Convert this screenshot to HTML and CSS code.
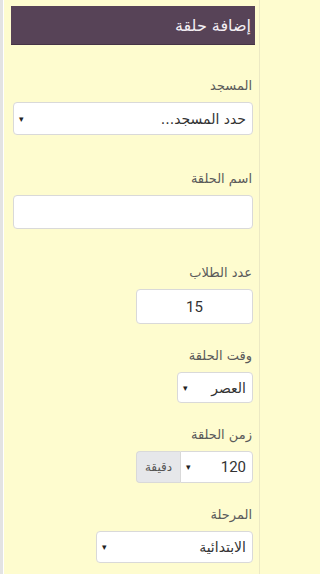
FILE: index.html
```html
<!DOCTYPE html>
<html lang="ar" dir="rtl">
<head>
<meta charset="utf-8">
<title>إضافة حلقة</title>
<link rel="stylesheet" href="styles.css">
</head>
<body>
<div class="frame">
  <div class="inner">
    <div class="panel-head">إضافة حلقة</div>
    <form class="form">
      <div class="group g1">
        <label class="lbl">المسجد</label>
        <div class="ctl sel full h33"><span class="val">حدد المسجد...</span><span class="arrow">▾</span></div>
      </div>
      <div class="group g2">
        <label class="lbl">اسم الحلقة</label>
        <div class="ctl inp full h34"></div>
      </div>
      <div class="group g2">
        <label class="lbl">عدد الطلاب</label>
        <div class="ctl inp num w117 h35"><span class="numtxt">15</span></div>
      </div>
      <div class="group g3">
        <label class="lbl">وقت الحلقة</label>
        <div class="ctl sel w76 h31"><span class="val">العصر</span><span class="arrow">▾</span></div>
      </div>
      <div class="group g3">
        <label class="lbl">زمن الحلقة</label>
        <div class="igroup h32">
          <div class="ctl sel w73 joined"><span class="val numtxt">120</span><span class="arrow">▾</span></div>
          <div class="addon">دقيقة</div>
        </div>
      </div>
      <div class="group g3">
        <label class="lbl">المرحلة</label>
        <div class="ctl sel w157 h32"><span class="val">الابتدائية</span><span class="arrow">▾</span></div>
      </div>
    </form>
  </div>
</div>
</body>
</html>
```
FILE: styles.css
```css
html, body {
  margin: 0;
  padding: 0;
  background: #fefccf;
}
body {
  font-family: "DejaVu Sans", "Noto Sans", sans-serif;
  direction: rtl;
}
.frame {
  min-height: 574px;
  border-left: 3px solid #e3e3e3;
  box-sizing: border-box;
  width: 260px;
  margin-left: 0;
  margin-right: auto;
}
.inner {
  border-left: 1px solid #ffffff;
  border-right: 1px solid #ece9c4;
  min-height: 574px;
  box-sizing: border-box;
  padding-top: 6px;
}
.panel-head {
  margin: 0 4px 0 7px;
  height: 39px;
  box-sizing: border-box;
  background: #574357;
  border-bottom: 1px solid #453345;
  color: #f3eef3;
  font-size: 16px;
  display: flex;
  align-items: center;
  padding-right: 4px;
}
.form {
  padding: 0 6px 0 9px;
  display: flex;
  flex-direction: column;
  align-items: stretch;
}
.group {
  display: flex;
  flex-direction: column;
  align-items: flex-start;
}
.g1 { margin-top: 32px; }
.g2 { margin-top: 35px; }
.g3 { margin-top: 23px; }
.lbl {
  display: block;
  font-size: 13px;
  line-height: 18px;
  color: #5a5a5a;
  margin-bottom: 7px;
  padding-right: 1px;
}
.ctl {
  box-sizing: border-box;
  background: #ffffff;
  border: 1px solid #d9d9d9;
  border-radius: 4px;
  display: flex;
  align-items: center;
  justify-content: space-between;
  color: #333333;
  font-size: 14px;
}
.full { width: 100%; }
.w117 { width: 117px; }
.w76 { width: 76px; }
.w73 { width: 73px; }
.w157 { width: 157px; }
.h31 { height: 31px; }
.h32 { height: 32px; }
.h33 { height: 33px; }
.h34 { height: 34px; }
.h35 { height: 35px; }
.sel { padding: 0 6px 0 5px; }
.arrow {
  font-size: 9px;
  color: #222222;
  font-family: "DejaVu Sans", sans-serif;
}
.num { justify-content: center; }
.numtxt {
  font-family: Roboto, "Liberation Sans", sans-serif;
  font-size: 15px;
  color: #333333;
}
.igroup {
  display: flex;
  flex-direction: row;
}
.igroup .ctl { height: 100%; }
.joined {
  border-radius: 0 4px 4px 0;
}
.addon {
  box-sizing: border-box;
  width: 44px;
  height: 100%;
  background: #e6e7ea;
  border: 1px solid #d9d9d9;
  border-right: none;
  border-radius: 4px 0 0 4px;
  display: flex;
  align-items: center;
  justify-content: center;
  font-size: 12px;
  color: #555555;
}
```
